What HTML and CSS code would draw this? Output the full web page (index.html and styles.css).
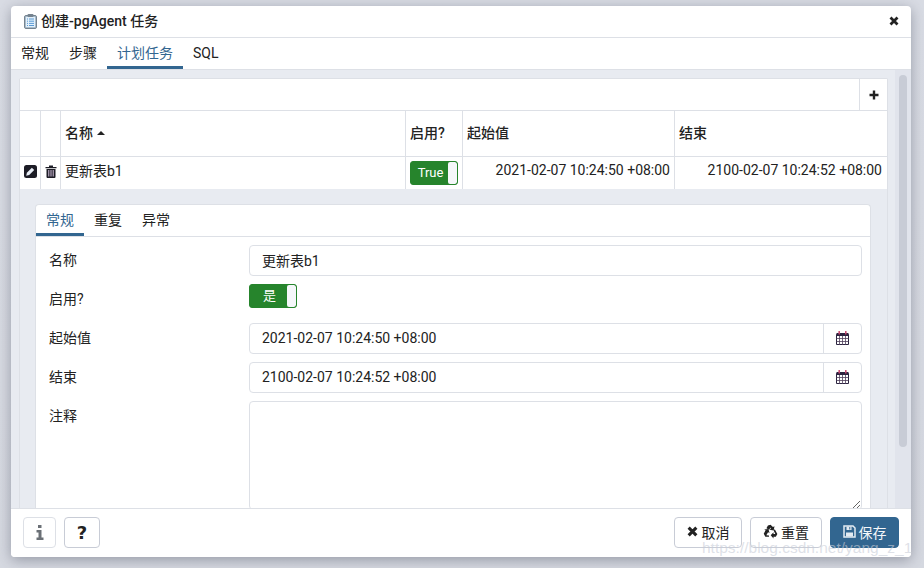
FILE: index.html
```html
<!DOCTYPE html>
<html lang="zh">
<head>
<meta charset="utf-8">
<title>创建-pgAgent 任务</title>
<link rel="stylesheet" href="styles.css">
</head>
<body>
<div class="dialog">
  <header class="title-bar">
    <svg class="title-icon" viewBox="0 0 13 15"><rect x=".5" y="1.500" width="12" height="13" rx="1.500" fill="#a9bccb" stroke="#75838f"/><rect x="2" y="3" width="9" height="10" fill="#e3f0fa"/><rect x="3.500" y="0" width="6" height="3" rx="1" fill="#75838f"/><path d="M3 5h1M5 5h5M3 7.200h1M5 7.200h5M3 9.400h1M5 9.400h5M3 11.500h1M5 11.500h5" stroke="#5b9bd5"/></svg>
    <span class="title-text">创建-pgAgent 任务</span>
    <svg class="close-icon" viewBox="0 0 10 10"><path d="M1.500 1.500l7 7M8.500 1.500l-7 7" stroke="#222" stroke-width="2.800"/></svg>
  </header>
  <nav class="tabs main-tabs">
    <span class="tab">常规</span>
    <span class="tab">步骤</span>
    <span class="tab active">计划任务</span>
    <span class="tab">SQL</span>
  </nav>
  <div class="content">
    <div class="scroll-area">
      <section class="grid-panel">
        <div class="grid-toolbar">
          <span class="add-btn"><svg viewBox="0 0 10 10"><path d="M5 .5v9M.5 5h9" stroke="#222" stroke-width="2.400"/></svg></span>
        </div>
        <div class="grid-row grid-head">
          <div class="cell"></div>
          <div class="cell"></div>
          <div class="cell th">名称 <i class="sort-up"></i></div>
          <div class="cell th">启用?</div>
          <div class="cell th">起始值</div>
          <div class="cell th last">结束</div>
        </div>
        <div class="grid-row grid-body">
          <div class="cell icon-cell"><svg class="edit-icon" viewBox="0 0 13 13"><rect width="13" height="13" rx="2.500" fill="#1d1d26"/><path d="M2.200 10.800l.7-3 5-5 2.300 2.300-5 5z" fill="#e8eef6"/></svg></div>
          <div class="cell icon-cell"><svg class="trash-icon" viewBox="0 0 12 13"><path d="M4 2V.5h4V2h3.500v1.300H.5V2zM1.500 4h9v8a1 1 0 0 1-1 1h-7a1 1 0 0 1-1-1z" fill="#1d1d26"/><path d="M3.800 5v6.500M6 5v6.500M8.200 5v6.500" stroke="#d8c4e0"/></svg></div>
          <div class="cell td">更新表b1</div>
          <div class="cell td switch-cell"><span class="switch"><span class="switch-on">True</span><span class="switch-knob"></span></span></div>
          <div class="cell td right">2021-02-07 10:24:50 +08:00</div>
          <div class="cell td right last">2100-02-07 10:24:52 +08:00</div>
        </div>
        <div class="detail">
          <div class="sub-panel">
            <nav class="tabs sub-tabs">
              <span class="tab active">常规</span>
              <span class="tab">重复</span>
              <span class="tab">异常</span>
            </nav>
            <div class="form">
              <div class="form-row"><label>名称</label><div class="input text-input">更新表b1</div></div>
              <div class="form-row switch-row"><label>启用?</label><span class="switch"><span class="switch-on">是</span><span class="switch-knob"></span></span></div>
              <div class="form-row"><label>起始值</label><div class="input date"><span class="date-text">2021-02-07 10:24:50 +08:00</span><span class="cal"><svg viewBox="0 0 13 14"><path d="M.5 3.500h12v10H.5z" fill="#fff" stroke="#2c2440"/><rect x=".5" y="2" width="12" height="3" fill="#2c2440"/><path d="M3.200 0v3.500M9.800 0v3.500" stroke="#c9486e" stroke-width="1.500"/><path d="M.5 7.500h12M.5 10.500h12M3.500 5v9M6.500 5v9M9.500 5v9" stroke="#50405c" stroke-width=".8"/></svg></span></div></div>
              <div class="form-row"><label>结束</label><div class="input date"><span class="date-text">2100-02-07 10:24:52 +08:00</span><span class="cal"><svg viewBox="0 0 13 14"><path d="M.5 3.500h12v10H.5z" fill="#fff" stroke="#2c2440"/><rect x=".5" y="2" width="12" height="3" fill="#2c2440"/><path d="M3.200 0v3.500M9.800 0v3.500" stroke="#c9486e" stroke-width="1.500"/><path d="M.5 7.500h12M.5 10.500h12M3.500 5v9M6.500 5v9M9.500 5v9" stroke="#50405c" stroke-width=".8"/></svg></span></div></div>
              <div class="form-row"><label>注释</label><textarea class="input textarea"></textarea></div>
            </div>
          </div>
        </div>
      </section>
    </div>
    <div class="scrollbar"><div class="scroll-thumb"></div></div>
  </div>
  <footer class="footer">
    <button class="btn square muted"><svg viewBox="0 0 8 15" class="i-icon"><path d="M2 0h3.500v3H2zM.5 5h5v7.500H7.500V15H.5v-2.500h2V7.500h-2z" fill="#6b7076"/></svg></button>
    <button class="btn square help">?</button>
    <span class="spacer"></span>
    <button class="btn action"><svg class="x-icon" viewBox="0 0 10 10"><path d="M1.500 1.500l7 7M8.500 1.500l-7 7" stroke="#222" stroke-width="2.800"/></svg>取消</button>
    <button class="btn action reset"><svg class="recycle-icon" viewBox="0 0 14 14"><path d="M4.600 1.500 7 .6l2.300 2.200 1.400-.8-.7 4-3.900-.6 1.200-.9L7 3.200 5.700 5.400 3.200 4z" fill="#222"/><path d="M11 4.900l2.400 4.400-1.400 2.700H9.800v1.600L7.200 10.400l2.600-2.800v1.700h1.700L9.900 6z" fill="#222"/><path d="M.7 9.200 2.400 5.900l-1.300-.8 4-.4 1 3.800-1.400-.8-1.600 2.900 2.500.1V12H2.200z" fill="#222"/></svg>重置</button>
    <button class="btn primary"><svg class="save-icon" viewBox="0 0 13 13"><path d="M1 1h9l2 2v9H1z" fill="none" stroke="#e3ebf2" stroke-width="1.500"/><path d="M3.500 1.500h5v3.500h-5zM3 7.500h7v4H3z" fill="#e3ebf2"/><path d="M6.800 2v2.500" stroke="#326690"/></svg>保存</button>
  </footer>
</div>
<div class="watermark">https://blog.csdn.net/yang_z_1</div>
</body>
</html>
```

FILE: styles.css
```css
* { box-sizing: border-box; }
body {
  margin: 0;
  height: 568px;
  padding: 6px 13px 12px 11px;
  overflow: hidden;
  position: relative;
  background: linear-gradient(180deg, #d9dce4 0%, #d6d9e1 100%);
  font-family: Roboto, "Noto Sans CJK SC", sans-serif;
  font-size: 14px;
  color: #222;
}
.dialog {
  height: 551px;
  display: flex;
  flex-direction: column;
  background: #fff;
  border-radius: 4px;
  overflow: hidden;
  box-shadow: 0 3px 14px rgba(105, 110, 125, .6);
}
.title-bar {
  flex: none;
  height: 32px;
  display: flex;
  align-items: center;
  padding: 0 12px 1px 13px;
  border-bottom: 1px solid #dde0e6;
}
.title-icon { width: 13px; height: 15px; margin-right: 4px; }
.title-text { font-size: 14px; font-weight: 500; line-height: 18px; color: #222; flex: 1; }
.close-icon { width: 10px; height: 10px; }
.tabs { display: flex; flex: none; }
.main-tabs { height: 32px; background: #fff; border-bottom: 1px solid #dde0e6; }
.tab {
  padding: 0 10px;
  line-height: 31px;
  height: 31px;
  color: #222;
}
.tab.active {
  color: #326690;
  border-bottom: 3px solid #326690;
}
.content {
  flex: 1;
  min-height: 0;
  display: flex;
  background: #e8ebf1;
  overflow: hidden;
}
.scroll-area { flex: 1; min-width: 0; padding: 8px 0 0 8px; overflow: hidden; }
.grid-panel {
  width: 869px;
  border: 1px solid #dde0e6;
  border-bottom: 0;
  border-radius: 2px 2px 0 0;
}
.grid-toolbar {
  height: 32px;
  background: #fff;
  display: flex;
  justify-content: flex-end;
  border-bottom: 1px solid #dde0e6;
}
.add-btn {
  width: 28px;
  display: flex;
  align-items: center;
  justify-content: center;
  border-left: 1px solid #dde0e6;
}
.add-btn svg { width: 10px; height: 10px; }
.grid-row {
  display: grid;
  grid-template-columns: 21px 20px 345px 57px 212px 212px;
  background: #fff;
}
.grid-head { height: 46px; border-bottom: 1px solid #dde0e6; }
.grid-body { height: 32px; }
.cell { border-right: 1px solid #dde0e6; padding: 0 4px; display: flex; align-items: center; min-width: 0; white-space: nowrap; }
.cell.last { border-right: 0; padding-right: 5px; }
.th { font-weight: 500; color: #222; padding-bottom: 4px; }
.sort-up {
  display: inline-block;
  margin: 3px 0 0 4px;
  border-left: 4px solid transparent;
  border-right: 4px solid transparent;
  border-bottom: 4px solid #222;
}
.icon-cell { padding: 0 0 4px; justify-content: center; }
.edit-icon { width: 13px; height: 13px; }
.trash-icon { width: 12px; height: 13px; }
.td { padding-bottom: 6px; }
.right { justify-content: flex-end; }
.switch-cell { padding: 0 0 0 4px; }
.switch {
  width: 48px;
  height: 24px;
  display: flex;
  background: #26842c;
  border: 1px solid #26842c;
  border-radius: 3px;
  overflow: hidden;
  color: #fff;
  font-size: 13px;
  flex: none;
}
.switch-on { flex: 1; text-align: center; line-height: 22px; padding-left: 2px; }
.switch-knob { width: 9px; background: #f5f7fa; border-radius: 2px; }
.detail { background: #e8ebf1; padding: 15px 16px 0 15px; }
.sub-panel {
  background: #fff;
  border: 1px solid #dde0e6;
  border-bottom: 0;
  border-radius: 4px 4px 0 0;
  height: 310px;
  overflow: hidden;
}
.sub-tabs { height: 32px; border-bottom: 1px solid #dde0e6; }
.form { padding: 8px 8px 0 13px; display: flex; flex-direction: column; gap: 8px; }
.form-row { display: flex; align-items: flex-start; }
.form-row label { width: 200px; flex: none; padding-top: 6px; line-height: 18px; }
.input {
  flex: 1;
  min-width: 0;
  height: 31px;
  border: 1px solid #dde0e6;
  border-radius: 4px;
  background: #fff;
  padding: 0 12px;
  line-height: 29px;
}
.text-input { line-height: 31px; }
.switch-row { height: 24px; margin-bottom: 7px; }
.date { display: flex; padding-right: 0; }
.date-text { flex: 1; }
.cal {
  width: 38px;
  border-left: 1px solid #dde0e6;
  display: flex;
  align-items: center;
  justify-content: center;
  padding-bottom: 1px;
}
.cal svg { width: 13px; height: 14px; }
.textarea { height: 109px; display: block; resize: vertical; margin: 0; outline: none; font: inherit; }
.scrollbar { flex: none; width: 16px; padding: 5px 0 0 4px; background: #e1e4ec; }
.scroll-thumb { width: 8px; height: 372px; background: #c8ccd6; border-radius: 4px; }
.footer {
  flex: none;
  height: 49px;
  display: flex;
  align-items: flex-start;
  gap: 8px;
  padding: 8px 12px 0 12px;
  border-top: 1px solid #dde0e6;
  background: #fff;
}
.spacer { flex: 1; }
.btn {
  height: 31px;
  border: 1px solid #c8ccd6;
  border-radius: 4px;
  background: #fff;
  font: inherit;
  color: #222;
  display: flex;
  align-items: center;
  justify-content: center;
  padding: 0 0 2px;
}
.square.muted { width: 33px; border-color: #dde0e6; padding: 0; }
.i-icon { width: 8px; height: 15px; }
.square.help { width: 36px; font-family: "DejaVu Sans", sans-serif; font-weight: 700; font-size: 18px; padding: 0; }
.action { width: 68px; }
.reset { width: 72px; }
.primary { width: 69px; background: #326690; border-color: #326690; color: #f4f7fa; }
.x-icon { width: 11px; height: 11px; margin-right: 4px; }
.recycle-icon { width: 15px; height: 15px; margin-right: 3px; }
.save-icon { width: 13px; height: 13px; margin-right: 3px; }
.watermark {
  position: absolute;
  left: 702px;
  top: 539px;
  font-family: "Liberation Sans", sans-serif;
  font-size: 15.500px;
  color: rgba(200, 205, 215, .6);
  white-space: nowrap;
}
```
